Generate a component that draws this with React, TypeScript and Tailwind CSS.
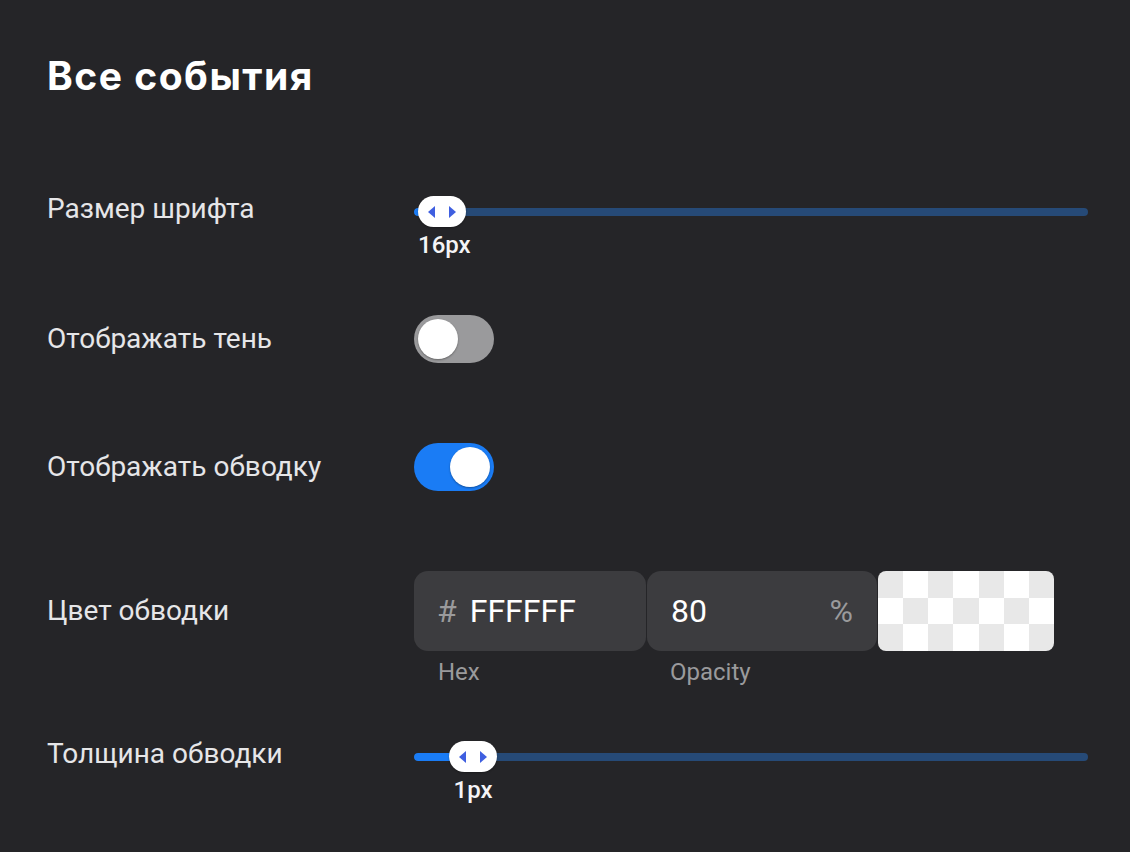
import { useState } from 'react'

const roboto = { fontFamily: 'Roboto, "Noto Sans", sans-serif' }

function Thumb() {
  return (
    <div className="flex h-[31px] w-[48px] items-center justify-center gap-[14px] rounded-full bg-white shadow-[0_1px_2px_rgba(0,0,0,0.3)]">
      <svg width="7" height="12" viewBox="0 0 7 12">
        <path d="M7 0 L0 6 L7 12 Z" fill="#3f5fe0" />
      </svg>
      <svg width="7" height="12" viewBox="0 0 7 12">
        <path d="M0 0 L7 6 L0 12 Z" fill="#3f5fe0" />
      </svg>
    </div>
  )
}

function Slider({ offset, value }: { offset: number; value: string }) {
  return (
    <div className="w-[674px]">
      <div className="relative flex h-[31px] items-center">
        <div className="h-[8px] w-full overflow-hidden rounded-full bg-[#264a77]">
          <div className="h-full rounded-full bg-[#1a7cf5]" style={{ width: offset + 24 }} />
        </div>
        <div className="absolute top-0" style={{ left: offset }}>
          <Thumb />
        </div>
      </div>
      <div className="mt-[4px] w-[48px] text-center" style={{ marginLeft: offset }}>
        <span className="whitespace-nowrap text-[24px] font-medium leading-[28px] text-[#f4f4f6]" style={roboto}>
          {value}
        </span>
      </div>
    </div>
  )
}

function Toggle({ on, onChange }: { on: boolean; onChange: () => void }) {
  return (
    <button
      onClick={onChange}
      className={
        'flex h-[48px] w-[80px] items-center rounded-full px-[4px] ' +
        (on ? 'justify-end bg-[#1a7cf5]' : 'justify-start bg-[#9a9a9c]')
      }
    >
      <span className="block h-[40px] w-[40px] rounded-full bg-white shadow-[0_1px_2px_rgba(0,0,0,0.35)]" />
    </button>
  )
}

function Label({ children }: { children: React.ReactNode }) {
  return (
    <div className="w-[367px] shrink-0 text-[28px] leading-[32px] text-[#e6e6e8]" style={roboto}>
      {children}
    </div>
  )
}

export default function App() {
  const [shadow, setShadow] = useState(false)
  const [stroke, setStroke] = useState(true)

  const cells = Array.from({ length: 21 }, (_, i) => i)

  return (
    <div className="min-h-screen bg-[#252528] pl-[47px] pt-[53px]">
      <h1
        className="text-[39px] font-bold leading-[46px] tracking-[1.5px] text-white"
        style={{ fontFamily: 'Inter, "Noto Sans", sans-serif' }}
      >
        Все события
      </h1>

      {/* Размер шрифта */}
      <div className="mt-[94px] flex items-start">
        <Label>Размер шрифта</Label>
        <div className="mt-[3px]">
          <Slider offset={4} value="16px" />
        </div>
      </div>

      {/* Тень */}
      <div className="mt-[56px] flex h-[48px] items-center">
        <Label>Отображать тень</Label>
        <Toggle on={shadow} onChange={() => setShadow(!shadow)} />
      </div>

      {/* Обводка */}
      <div className="mt-[80px] flex h-[48px] items-center">
        <Label>Отображать обводку</Label>
        <Toggle on={stroke} onChange={() => setStroke(!stroke)} />
      </div>

      {/* Цвет обводки */}
      <div className="mt-[80px] flex items-start">
        <div className="flex h-[80px] items-center">
          <Label>Цвет обводки</Label>
        </div>
        <div style={roboto}>
          <div className="flex h-[80px] items-stretch">
            <div className="flex w-[232px] items-center rounded-[14px] bg-[#3c3c3f] pl-[23px] text-[32px]">
              <span className="text-[#9a9a9c]">#</span>
              <span className="ml-[13px] text-white">FFFFFF</span>
            </div>
            <div className="ml-[1px] flex w-[230px] items-center justify-between rounded-[14px] bg-[#3c3c3f] px-[24px] text-[32px]">
              <span className="text-white">80</span>
              <span className="text-[#9a9a9c]">%</span>
            </div>
            <div className="ml-[1px] grid w-[176px] grid-cols-7 grid-rows-3 overflow-hidden rounded-[8px]">
              {cells.map((i) => {
                const r = Math.floor(i / 7)
                const c = i % 7
                return (
                  <div
                    key={i}
                    className={(r + c) % 2 === 0 ? 'bg-[#e8e8e8]' : 'bg-white'}
                  />
                )
              })}
            </div>
          </div>
          <div className="mt-[7px] flex text-[24px] leading-[28px] text-[#9a9a9c]">
            <span className="w-[233px] pl-[24px]">Hex</span>
            <span className="pl-[23px]">Opacity</span>
          </div>
        </div>
      </div>

      {/* Толщина обводки */}
      <div className="mt-[55px] flex items-start">
        <div className="-mt-[3px] flex h-[31px] items-center">
          <Label>Толщина обводки</Label>
        </div>
        <Slider offset={35} value="1px" />
      </div>
    </div>
  )
}
